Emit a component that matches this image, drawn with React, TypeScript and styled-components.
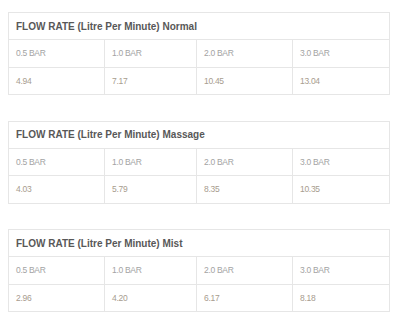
import * as React from 'react';
import styled, { createGlobalStyle } from 'styled-components';

const GlobalStyle = createGlobalStyle`
  body {
    margin: 0;
    background: #ffffff;
    font-family: "Liberation Sans", Arial, sans-serif;
  }
`

const Page = styled.div`
  padding: 12px 11px 0 8px;
  display: flex;
  flex-direction: column;
  gap: 25.5px;
`

const Table = styled.table`
  width: 381px;
  border-collapse: collapse;
  table-layout: fixed;
`

const HeadCell = styled.th`
  height: 26px;
  padding: 0 7px;
  border: 1px solid #e6e6e6;
  text-align: left;
  font-size: 10px;
  font-weight: 700;
  color: #585858;
`

const Cell = styled.td<{ value?: boolean }>`
  height: 26.5px;
  padding: 0 7px;
  border: 1px solid #e6e6e6;
  font-size: 8.5px;
  letter-spacing: -0.3px;
  color: ${(p) => (p.value ? '#a79c8e' : '#a3a3a3')};
`

const pressures = ['0.5 BAR', '1.0 BAR', '2.0 BAR', '3.0 BAR']
const widths = [96, 92, 96, 97]

const modes = [
  { name: 'Normal', values: ['4.94', '7.17', '10.45', '13.04'] },
  { name: 'Massage', values: ['4.03', '5.79', '8.35', '10.35'] },
  { name: 'Mist', values: ['2.96', '4.20', '6.17', '8.18'] },
]

export default function App() {
  return (
    <Page>
      <GlobalStyle />
      {modes.map((m) => (
        <Table key={m.name}>
          <colgroup>
            {widths.map((w, i) => (
              <col key={i} style={{ width: w }} />
            ))}
          </colgroup>
          <thead>
            <tr>
              <HeadCell colSpan={4}>FLOW RATE (Litre Per Minute) {m.name}</HeadCell>
            </tr>
          </thead>
          <tbody>
            <tr>
              {pressures.map((p) => (
                <Cell key={p}>{p}</Cell>
              ))}
            </tr>
            <tr>
              {m.values.map((v, i) => (
                <Cell key={i} value>{v}</Cell>
              ))}
            </tr>
          </tbody>
        </Table>
      ))}
    </Page>
  )
}
